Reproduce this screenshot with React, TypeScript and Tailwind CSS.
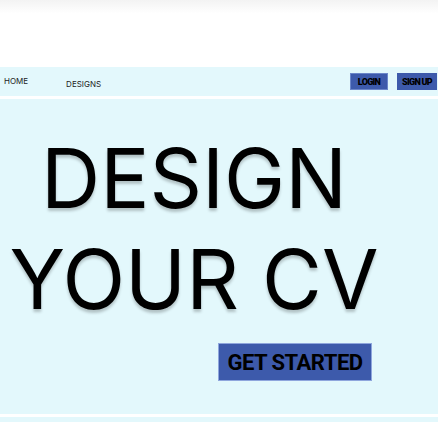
export default function App() {
  return (
    <main
      className="flex min-h-screen flex-col bg-white"
      style={{ fontFamily: "Roboto, 'Liberation Sans', sans-serif" }}
    >
      <div className="h-[67px] bg-gradient-to-b from-[#f3f3f3] via-white via-20% to-white" />
      <nav className="flex h-[29px] items-center bg-[#e3f8fc] pl-[4px] pr-[1px]">
        <a className="mb-[1px] text-[8px] text-[#222]" style={{ fontFamily: "Inter, sans-serif" }}>
          HOME
        </a>
        <a className="ml-[38px] mt-[4px] text-[8px] text-[#222]" style={{ fontFamily: "Inter, sans-serif" }}>
          DESIGNS
        </a>
        <button className="ml-auto flex h-[17px] w-[38px] items-center justify-center border border-[#6b86c9] bg-[#3d5aab] pt-[3px] text-[9px] font-black tracking-[-0.7px] text-black">
          LOGIN
        </button>
        <button className="ml-[9px] flex h-[17px] w-[40px] items-center justify-center bg-[#3d5aab] pt-[3px] text-[9px] font-black tracking-[-0.7px] text-black">
          SIGN UP
        </button>
      </nav>
      <section className="mt-[3px] flex h-[315px] flex-col bg-[#e3f8fc]">
        <h1
          className="mt-[29px] w-[388px] text-center text-[82px] font-normal leading-[101px] text-black"
          style={{ fontFamily: "Inter, sans-serif", textShadow: "0 3px 3px rgba(0,0,0,0.22)" }}
        >
          DESIGN
          <br />
          YOUR CV
        </h1>
        <button className="ml-[218px] mt-[13px] flex h-[38px] w-[154px] items-center justify-center border border-[#8fa6dd] bg-[#3d5aab] text-[22px] font-bold tracking-[-0.5px] text-black">
          GET STARTED
        </button>
      </section>
      <div className="mt-[3px] flex-1 bg-[#e3f8fc]" />
    </main>
  );
}
